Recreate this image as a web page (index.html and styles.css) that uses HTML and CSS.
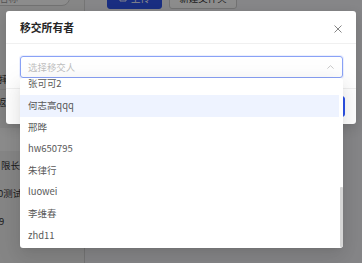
FILE: index.html
```html
<!DOCTYPE html>
<html lang="zh-CN">
<head>
<meta charset="utf-8">
<title>移交所有者</title>
<link rel="stylesheet" href="styles.css">
</head>
<body>
<div class="page">
  <aside class="sidebar">
    <div class="side-top"><div class="search">名称</div></div>
    <div class="side-gap1"></div>
    <div class="side-row r1">摔</div>
    <div class="side-row r2">返</div>
    <div class="side-gap2"></div>
    <div class="band"></div>
    <div class="side-row r3">限长</div>
    <div class="side-row r4">0测试</div>
    <div class="side-row r5">9</div>
  </aside>
  <main class="content">
    <div class="toolbar">
      <button class="tb-btn tb-primary">
        <svg class="up-icon" width="8" height="8" viewBox="0 0 8 8"><path d="M1 4.5V7h6V4.5M4 5V1M2.3 2.6L4 1l1.7 1.6" fill="none" stroke="#fff" stroke-width="0.9"/></svg>
        <span>上传</span>
      </button>
      <button class="tb-btn tb-default">新建文件夹</button>
    </div>
  </main>
</div>
<div class="mask"></div>
<section class="modal">
  <header class="modal-header">
    <span class="modal-title">移交所有者</span>
    <svg class="close" width="8" height="8" viewBox="0 0 8 8"><path d="M0.5 0.5L7.5 7.5M7.5 0.5L0.5 7.5" stroke="#777" stroke-width="0.9" fill="none"/></svg>
  </header>
  <div class="modal-body">
    <div class="select">
      <span class="placeholder">选择移交人</span>
      <svg class="arrow" width="7" height="4" viewBox="0 0 7 4"><path d="M0.4 3.6L3.5 0.6L6.6 3.6" fill="none" stroke="#c4c4c4" stroke-width="0.9"/></svg>
    </div>
  </div>
  <footer class="modal-footer">
    <button class="f-btn">取消</button>
    <button class="f-btn f-primary">确定</button>
  </footer>
</section>
<div class="dropdown">
  <div class="opt-list">
    <div class="opt-inner">
      <div class="opt">张可可2</div>
      <div class="opt active">何志高qqq</div>
      <div class="opt">邢晔</div>
      <div class="opt">hw650795</div>
      <div class="opt">朱律行</div>
      <div class="opt">luowei</div>
      <div class="opt">李维春</div>
      <div class="opt">zhd11</div>
    </div>
  </div>
  <div class="scroll-track"><div class="thumb"></div></div>
</div>
</body>
</html>
```

FILE: styles.css
```css
* { box-sizing: border-box; }
html, body { margin: 0; padding: 0; }
body {
  width: 362px;
  height: 263px;
  overflow: hidden;
  position: relative;
  font-family: "Noto Sans CJK SC", "Noto Sans", sans-serif;
  font-size: 9.45px;
  color: #333;
  background: #f4f5f7;
}
.page { display: flex; height: 263px; }

.sidebar {
  width: 85px;
  flex: none;
  border-right: 1px solid #d6d6d6;
  background: #f4f4f4;
  display: flex;
  flex-direction: column;
  overflow: hidden;
}
.side-top { height: 11px; flex: none; }
.search {
  margin-top: -12px;
  margin-left: -10px;
  width: 80px;
  height: 18px;
  border: 1px solid #d0d0d0;
  border-radius: 8px;
  background: #fff;
  line-height: 19px;
  padding-left: 8px;
  color: #999;
  white-space: nowrap;
}
.side-gap1 { height: 59px; flex: none; }
.side-gap2 { height: 14px; flex: none; }
.side-row { white-space: nowrap; color: #333; flex: none; }
.r1 { height: 20px; line-height: 19px; border-bottom: 1px solid #e2e2e2; margin-left: -1px; }
.r2 { height: 24px; line-height: 24px; margin-left: -3px; }
.band { height: 23px; background: #fff; flex: none; }
.r3, .r4, .r5 { height: 28px; line-height: 28px; }
.r3 { padding-left: 1px; }
.r4 { margin-left: -2px; }
.r5 { margin-left: -1px; }

.content { flex: 1; background: #f4f5f7; }
.toolbar {
  display: flex;
  align-items: flex-start;
  gap: 7px;
  margin-top: -13px;
  padding-left: 22px;
}
.tb-btn {
  height: 22px;
  border-radius: 3px;
  font: inherit;
  font-size: 9.45px;
  display: flex;
  align-items: center;
  justify-content: center;
  gap: 4px;
  padding: 0;
}
.tb-primary { width: 55px; background: #2f54eb; color: #fff; border: 1px solid #2f54eb; }
.tb-default { width: 68px; background: #fff; color: #333; border: 1px solid #d0d0d0; }

.mask {
  position: absolute;
  inset: 0;
  background: rgba(0, 0, 0, 0.45);
}

.modal {
  position: absolute;
  left: 6px;
  top: 11px;
  width: 350px;
  background: #fff;
  border-radius: 3px;
  box-shadow: 0 4px 12px rgba(0, 0, 0, 0.15);
}
.modal-header {
  height: 33px;
  border-bottom: 1px solid #f0f0f0;
  display: flex;
  align-items: center;
  justify-content: space-between;
  padding: 0 14px;
}
.modal-title {
  font-size: 10.8px;
  font-weight: 700;
  color: #262626;
}
.close { margin-top: 3px; }
.modal-body { padding: 12px 13px 10px 14px; }
.select {
  height: 21.5px;
  border: 1px solid #8aa2f6;
  border-radius: 3px;
  box-shadow: 0 0 0 1px rgba(89, 126, 247, 0.12);
  display: flex;
  align-items: center;
  justify-content: space-between;
  padding: 0 8px 0 7px;
}
.placeholder { color: #bfbfbf; }
.modal-footer {
  border-top: 1px solid #f0f0f0;
  padding: 7px 11px 7px;
  display: flex;
  justify-content: flex-end;
  gap: 5px;
}
.f-btn {
  width: 43px;
  height: 21.6px;
  border-radius: 3px;
  font: inherit;
  font-size: 9.45px;
  border: 1px solid #d9d9d9;
  background: #fff;
  color: #333;
  padding: 0;
}
.f-primary { background: #2f54eb; border-color: #2f54eb; color: #fff; }

.dropdown {
  position: absolute;
  left: 20px;
  top: 78px;
  width: 323px;
  height: 170px;
  background: #fff;
  border-radius: 3px;
  box-shadow: 0 3px 6px -4px rgba(0, 0, 0, 0.12), 0 6px 16px 0 rgba(0, 0, 0, 0.08), 0 9px 28px 8px rgba(0, 0, 0, 0.05);
  display: flex;
  overflow: hidden;
}
.opt-list { flex: 1; overflow: hidden; }
.opt-inner { margin-top: -4.6px; }
.opt {
  height: 21.6px;
  line-height: 21.6px;
  padding-left: 8px;
  color: #595959;
  white-space: nowrap;
}
.opt.active { background: #eef3ff; }
.scroll-track { width: 4px; flex: none; padding: 0 0.5px; }
.thumb {
  margin-top: 109px;
  height: 60px;
  background: #d6d6d6;
  border-radius: 1px;
}
```
